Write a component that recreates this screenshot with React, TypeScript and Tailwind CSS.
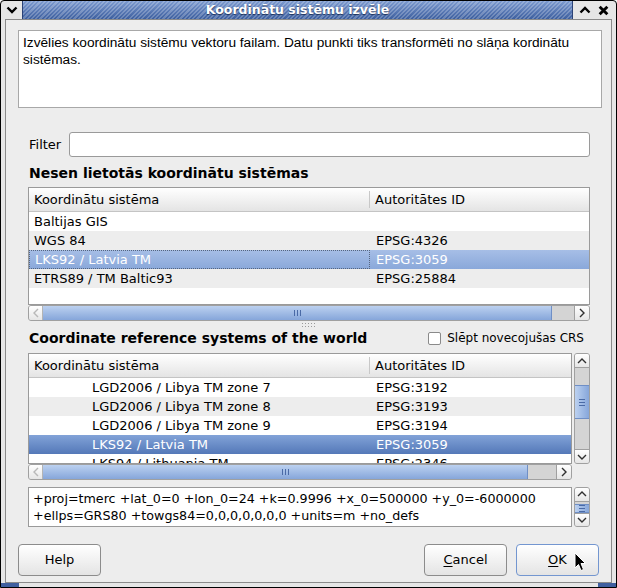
import React from "react";

const ui = "font-['DejaVu_Sans',sans-serif] text-[13px] text-black";

// small arrow glyph used by the scrollbars
function Arrow({ dir, faded = false }: { dir: "left" | "right" | "up" | "down"; faded?: boolean }) {
    const d = {
        left: "M6 1 L2 5 L6 9",
        right: "M2 1 L6 5 L2 9",
        up: "M1 6 L5 2 L9 6",
        down: "M1 2 L5 6 L9 2",
    }[dir];
    const box = dir === "left" || dir === "right" ? "0 0 8 10" : "0 0 10 8";
    const size = dir === "left" || dir === "right" ? "w-[8px] h-[10px]" : "w-[10px] h-[8px]";
    return (
        <svg viewBox={box} className={size} fill="none" stroke={faded ? "#b8b8b8" : "#303030"} strokeWidth={1.4}>
            <path d={d} />
        </svg>
    );
}

function HScroll({ trackClass }: { trackClass: string }) {
    return (
        <div className="flex h-[16px] rounded-[3px] border border-[#a0a0a0] bg-[#d4d4d4] overflow-hidden">
            <div className="w-[14px] flex items-center justify-center bg-gradient-to-b from-white to-[#e6e6e6] border-r border-[#b4b4b4]">
                <Arrow dir="left" faded />
            </div>
            <div className="flex-1 flex items-center justify-center border-r border-[#6f8fc6] bg-gradient-to-b from-[#bcd1f0] to-[#86a6da]">
                <span className="flex gap-[2px]">
                    <span className="w-px h-[6px] bg-[#4a6aa6]" />
                    <span className="w-px h-[6px] bg-[#4a6aa6]" />
                    <span className="w-px h-[6px] bg-[#4a6aa6]" />
                </span>
            </div>
            <div className={trackClass} />
            <div className="w-[15px] flex items-center justify-center bg-gradient-to-b from-white to-[#e6e6e6] border-l border-[#a0a0a0]">
                <Arrow dir="right" />
            </div>
        </div>
    );
}

function VScroll({ before, thumb }: { before: string; thumb: string }) {
    return (
        <div className="w-[16px] h-full flex flex-col rounded-[3px] border border-[#a0a0a0] bg-[#d4d4d4] overflow-hidden">
            <div className="h-[14px] flex items-center justify-center bg-gradient-to-b from-white to-[#e6e6e6] border-b border-[#a0a0a0]">
                <Arrow dir="up" />
            </div>
            <div className="flex-1 flex flex-col">
                <div className={before} />
                <div
                    className={`${thumb} flex flex-col items-center justify-center gap-[2px] border-y border-[#6f8fc6] bg-gradient-to-r from-[#bcd1f0] to-[#86a6da]`}
                >
                    <span className="w-[6px] h-px bg-[#4a6aa6]" />
                    <span className="w-[6px] h-px bg-[#4a6aa6]" />
                    <span className="w-[6px] h-px bg-[#4a6aa6]" />
                </div>
            </div>
            <div className="h-[14px] flex items-center justify-center bg-gradient-to-b from-white to-[#e6e6e6] border-t border-[#a0a0a0]">
                <Arrow dir="down" />
            </div>
        </div>
    );
}

function Header() {
    return (
        <div className="flex h-[24px] shrink-0 items-center bg-gradient-to-b from-white to-[#e4e4e4] border-b border-[#c4c4c4]">
            <div className="w-[341px] pl-[5px] border-r border-[#c8c8c8] h-[17px] flex items-center">Koordinātu sistēma</div>
            <div className="pl-[5px]">Autoritātes ID</div>
        </div>
    );
}

type Row = { name: string; id: string; bg: "white" | "alt" | "sel" | "selDark" };

function Rows({ rows, indent }: { rows: Row[]; indent: string }) {
    return (
        <>
            {rows.map((r) => {
                const bg =
                    r.bg === "sel"
                        ? "bg-gradient-to-b from-[#a6bee6] to-[#8aa8da] text-white"
                        : r.bg === "selDark"
                          ? "bg-gradient-to-b from-[#82a3d8] to-[#5478b8] text-white"
                          : r.bg === "alt"
                            ? "bg-[#ededed]"
                            : "bg-white";
                return (
                    <div key={r.name} className={`flex h-[19px] shrink-0 items-center ${bg}`}>
                        <div
                            className={`w-[341px] h-full flex items-center ${indent} ${
                                r.bg === "sel" ? "border border-dotted border-[#55657f]" : ""
                            }`}
                        >
                            {r.name}
                        </div>
                        <div className="pl-[6px]">{r.id}</div>
                    </div>
                );
            })}
        </>
    );
}

function Button({ children, focus = false }: { children: React.ReactNode; focus?: boolean }) {
    return (
        <div
            className={`relative w-[83px] h-[32px] flex items-center justify-center rounded-[4px] border bg-gradient-to-b from-white to-[#e4e4e4] ${
                focus ? "border-[#7396d0]" : "border-[#8c8c8c]"
            }`}
        >
            {children}
        </div>
    );
}

export default function App() {
    const recent: Row[] = [
        { name: "Baltijas GIS", id: "", bg: "white" },
        { name: "WGS 84", id: "EPSG:4326", bg: "alt" },
        { name: "LKS92 / Latvia TM", id: "EPSG:3059", bg: "sel" },
        { name: "ETRS89 / TM Baltic93", id: "EPSG:25884", bg: "alt" },
    ];
    const world: Row[] = [
        { name: "LGD2006 / Libya TM zone 7", id: "EPSG:3192", bg: "white" },
        { name: "LGD2006 / Libya TM zone 8", id: "EPSG:3193", bg: "alt" },
        { name: "LGD2006 / Libya TM zone 9", id: "EPSG:3194", bg: "white" },
        { name: "LKS92 / Latvia TM", id: "EPSG:3059", bg: "selDark" },
        { name: "LKS94 / Lithuania TM", id: "EPSG:2346", bg: "white" },
    ];

    return (
        <div className={`${ui} w-[617px] h-[588px] flex flex-col bg-[#e6e6e6] border border-black rounded-t-[4px] overflow-hidden`}>
            {/* title bar */}
            <div className="h-[18px] flex shrink-0">
                <div className="w-[21px] flex items-center justify-center">
                    <svg viewBox="0 0 12 8" className="w-[12px] h-[8px]" fill="none" stroke="#000" strokeWidth={2.4}>
                        <path d="M1.5 1.5 L6 6 L10.5 1.5" />
                    </svg>
                </div>
                <div className="flex-1 flex items-center justify-center border-x border-[#2b4276] bg-[#4a6cad] [background-image:repeating-linear-gradient(135deg,rgba(255,255,255,0.22)_0px,rgba(255,255,255,0.22)_1.5px,transparent_1.5px,transparent_3px),linear-gradient(to_bottom,#7d9bd0,#3d5f9f)]">
                    <span className="font-bold text-white text-[12.5px] [text-shadow:0_1px_1px_#1c2f58]">
                        Koordinātu sistēmu izvēle
                    </span>
                </div>
                <div className="w-[43px] flex items-center justify-around pl-[2px] pr-[3px]">
                    <svg viewBox="0 0 12 8" className="w-[12px] h-[8px]" fill="none" stroke="#000" strokeWidth={2.4}>
                        <path d="M1.5 6.5 L6 2 L10.5 6.5" />
                    </svg>
                    <svg viewBox="0 0 10 10" className="w-[11px] h-[11px]" fill="none" stroke="#000" strokeWidth={2.6}>
                        <path d="M1.5 1.5 L8.5 8.5 M8.5 1.5 L1.5 8.5" />
                    </svg>
                </div>
            </div>

            {/* dialog body */}
            <div className="flex-1 flex px-[4px]">
                <div className="flex-1 flex flex-col border border-[#8a8a8a] bg-[#ededed] pt-[10px]">
                    <div className="ml-[12px] mr-[9px] h-[78px] border border-[#a8a8a8] bg-white px-[4px] pt-[3px] font-['Liberation_Sans',sans-serif] text-[13.7px] leading-[17px]">
                        Izvēlies koordinātu sistēmu vektoru failam. Datu punkti tiks transformēti no slāņa kordinātu sistēmas.
                    </div>

                    <div className="ml-[22px] mr-[21px] flex flex-col">
                        <div className="mt-[24px] h-[25px] flex items-center gap-[8px]">
                            <span className="pl-px">Filter</span>
                            <div className="flex-1 h-full rounded-[3px] border border-[#9a9a9a] bg-white" />
                        </div>

                        <div className="mt-[8px] h-[16px] flex items-center pl-px font-bold text-[14px]">
                            Nesen lietotās koordinātu sistēmas
                        </div>

                        <div className="mt-[6px] h-[118px] flex flex-col border border-[#9a9a9a] bg-white overflow-hidden">
                            <Header />
                            <Rows rows={recent} indent="pl-[5px]" />
                        </div>
                        <HScroll trackClass="w-[22px]" />

                        <div className="h-[7px] flex items-center justify-center">
                            <svg viewBox="0 0 14 4" className="w-[14px] h-[4px]" fill="#9a9a9a">
                                <rect x="0" y="0" width="1" height="1" />
                                <rect x="3" y="0" width="1" height="1" />
                                <rect x="6" y="0" width="1" height="1" />
                                <rect x="9" y="0" width="1" height="1" />
                                <rect x="12" y="0" width="1" height="1" />
                                <rect x="0" y="3" width="1" height="1" />
                                <rect x="3" y="3" width="1" height="1" />
                                <rect x="6" y="3" width="1" height="1" />
                                <rect x="9" y="3" width="1" height="1" />
                                <rect x="12" y="3" width="1" height="1" />
                            </svg>
                        </div>

                        <div className="h-[20px] flex items-center">
                            <span className="pl-px font-bold text-[14px]">Coordinate reference systems of the world</span>
                            <span className="ml-auto mr-[6px] flex items-center gap-[6px] text-[12px]">
                                <span className="w-[13px] h-[13px] rounded-[2px] border border-[#8a8a8a] bg-white" />
                                Slēpt novecojušas CRS
                            </span>
                        </div>

                        <div className="mt-[5px] h-[127px] flex gap-[2px]">
                            <div className="flex-1 flex flex-col">
                                <div className="h-[111px] flex flex-col border border-[#9a9a9a] bg-white overflow-hidden">
                                    <Header />
                                    <Rows rows={world} indent="pl-[63px]" />
                                </div>
                                <HScroll trackClass="w-[28px]" />
                            </div>
                            <div className="h-[111px]">
                                <VScroll before="h-[17px]" thumb="h-[34px]" />
                            </div>
                        </div>

                        <div className="mt-[7px] h-[40px] flex gap-[2px]">
                            <div className="flex-1 border border-[#9a9a9a] bg-white px-[4px] pt-[2px] leading-[17px] text-[12.7px]">
                                <div>+proj=tmerc +lat_0=0 +lon_0=24 +k=0.9996 +x_0=500000 +y_0=-6000000</div>
                                <div>+ellps=GRS80 +towgs84=0,0,0,0,0,0,0 +units=m +no_defs</div>
                            </div>
                            <VScroll before="h-[2px]" thumb="h-[9px]" />
                        </div>
                    </div>

                    <div className="mt-[17px] mx-[12px] flex items-center">
                        <Button>Help</Button>
                        <div className="ml-auto flex gap-[9px]">
                            <Button>
                                <span>
                                    <span className="underline underline-offset-2">C</span>ancel
                                </span>
                            </Button>
                            <Button focus>
                                <span>
                                    <span className="underline underline-offset-2">O</span>K
                                </span>
                                {/* mouse pointer resting on the OK button */}
                                <svg viewBox="0 0 12 20" className="absolute left-[57px] top-[7px] w-[12px] h-[20px]">
                                    <path d="M1 1 L1 16 L4.5 12.5 L7 18.5 L9.5 17.5 L7 11.5 L11.5 11.5 Z" fill="#000" stroke="#fff" strokeWidth={1} />
                                </svg>
                            </Button>
                        </div>
                    </div>
                </div>
            </div>

            {/* bottom frame with the blue resize corners */}
            <div className="h-[4px] flex shrink-0">
                <div className="w-[18px] bg-[#3f5f9f]" />
                <div className="flex-1" />
                <div className="w-[18px] bg-[#3f5f9f]" />
            </div>
        </div>
    );
}
